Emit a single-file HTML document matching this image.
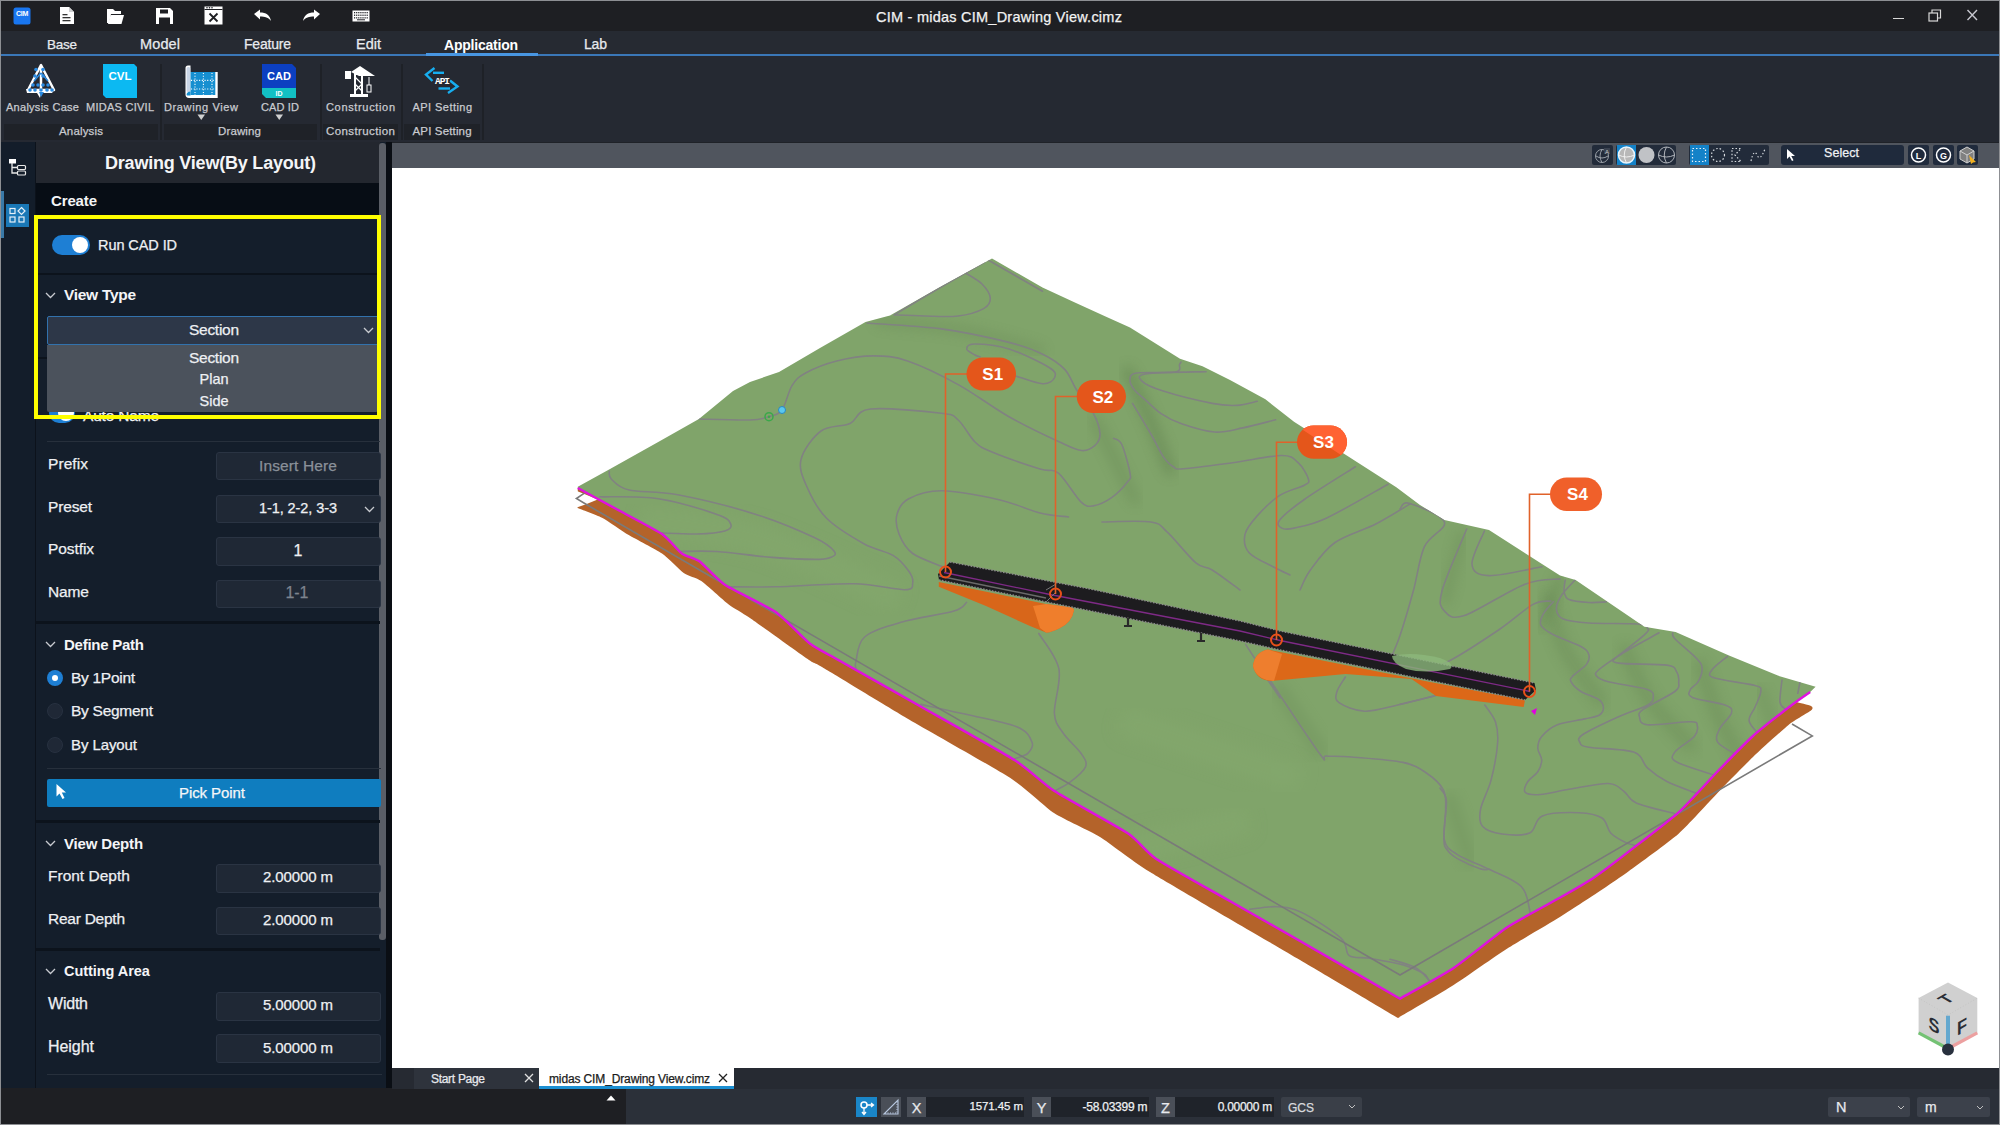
<!DOCTYPE html>
<html><head><meta charset="utf-8">
<style>
*{box-sizing:border-box;margin:0;padding:0}
html,body{width:2000px;height:1125px;overflow:hidden}
body{position:relative;background:#1e1f23;font-family:"Liberation Sans",sans-serif;color:#e8eaee}
.a{position:absolute}
.t{position:absolute;white-space:nowrap;line-height:1;font-family:"Liberation Sans",sans-serif}
svg{overflow:visible}
</style></head><body>
<div class="a" style="left:0px;top:0px;width:2000px;height:1125px;background:transparent;border:1px solid #8d8f93;z-index:50;pointer-events:none"></div>
<div class="a" style="left:1px;top:1px;width:1998px;height:30px;background:#1e1f23;"></div>
<div class="t" style="left:876.0px;top:10.1px;font-size:14.5px;color:#f2f2f2;-webkit-text-stroke:0.25px #f2f2f2;letter-spacing:0.24px;">CIM - midas CIM_Drawing View.cimz</div>
<svg class="a" style="left:13px;top:7px;" width="18" height="18" viewBox="0 0 18 18"><rect x="0.5" y="0.5" width="17" height="17" rx="2.5" fill="#1976f0"/><text x="9" y="9" font-size="7" font-weight="bold" fill="#fff" text-anchor="middle" font-family="Liberation Sans" letter-spacing="-0.3">CIM</text></svg>
<svg class="a" style="left:59px;top:6px;" width="16" height="19" viewBox="0 0 16 19"><path d="M1 1H10L15 6V18H1Z" fill="#fff"/><path d="M10 1V6H15" fill="#cfd0d2"/><rect x="3.5" y="8" width="5" height="1.3" fill="#333"/><rect x="3.5" y="11" width="8" height="1.3" fill="#333"/><rect x="3.5" y="14" width="8" height="1.3" fill="#333"/></svg>
<svg class="a" style="left:106px;top:7px;" width="19" height="18" viewBox="0 0 19 18"><path d="M1 2H7L9 4H15V7H5L3 16H1Z" fill="#fff"/><path d="M4.5 8H18L15.5 17H2Z" fill="#fff"/></svg>
<svg class="a" style="left:155px;top:7px;" width="19" height="18" viewBox="0 0 19 18"><path d="M1 1H15L18 4V17H1Z" fill="#fff"/><rect x="5" y="2.5" width="8" height="4" fill="#1e1f23"/><rect x="4" y="10.5" width="11" height="6.5" fill="#1e1f23"/></svg>
<svg class="a" style="left:204px;top:6px;" width="19" height="19" viewBox="0 0 19 19"><rect x="0.5" y="0.5" width="18" height="18" fill="#fff"/><rect x="1.5" y="3.5" width="16" height="14" fill="#fff"/><rect x="0.5" y="3" width="18" height="1" fill="#1e1f23"/><circle cx="3" cy="1.8" r=".8" fill="#1e1f23"/><circle cx="5.5" cy="1.8" r=".8" fill="#1e1f23"/><circle cx="8" cy="1.8" r=".8" fill="#1e1f23"/><path d="M5.5 7.5L13.5 15.5M13.5 7.5L5.5 15.5" stroke="#1e1f23" stroke-width="1.8"/></svg>
<svg class="a" style="left:253px;top:9px;" width="19" height="13" viewBox="0 0 19 13"><path d="M1 5L7 0.5V3.5C13 3.5 17 6 18 12C15.5 8.5 12 7.5 7 7.5V10.5Z" fill="#fff"/></svg>
<svg class="a" style="left:302px;top:9px;" width="19" height="13" viewBox="0 0 19 13"><path d="M18 5L12 0.5V3.5C6 3.5 2 6 1 12C3.5 8.5 7 7.5 12 7.5V10.5Z" fill="#fff"/></svg>
<svg class="a" style="left:352px;top:10px;" width="18" height="12" viewBox="0 0 18 12"><rect x="0.5" y="0.5" width="17" height="11" fill="#fff"/><rect x="2.0" y="2.0" width="1.2" height="1.3" fill="#1e1f23"/><rect x="4.1" y="2.0" width="1.2" height="1.3" fill="#1e1f23"/><rect x="6.2" y="2.0" width="1.2" height="1.3" fill="#1e1f23"/><rect x="8.3" y="2.0" width="1.2" height="1.3" fill="#1e1f23"/><rect x="10.4" y="2.0" width="1.2" height="1.3" fill="#1e1f23"/><rect x="12.5" y="2.0" width="1.2" height="1.3" fill="#1e1f23"/><rect x="14.6" y="2.0" width="1.2" height="1.3" fill="#1e1f23"/><rect x="2.0" y="4.6" width="1.2" height="1.3" fill="#1e1f23"/><rect x="4.1" y="4.6" width="1.2" height="1.3" fill="#1e1f23"/><rect x="6.2" y="4.6" width="1.2" height="1.3" fill="#1e1f23"/><rect x="8.3" y="4.6" width="1.2" height="1.3" fill="#1e1f23"/><rect x="10.4" y="4.6" width="1.2" height="1.3" fill="#1e1f23"/><rect x="12.5" y="4.6" width="1.2" height="1.3" fill="#1e1f23"/><rect x="14.6" y="4.6" width="1.2" height="1.3" fill="#1e1f23"/><rect x="2.0" y="7.2" width="1.2" height="1.3" fill="#1e1f23"/><rect x="4.1" y="7.2" width="1.2" height="1.3" fill="#1e1f23"/><rect x="6.2" y="7.2" width="1.2" height="1.3" fill="#1e1f23"/><rect x="8.3" y="7.2" width="1.2" height="1.3" fill="#1e1f23"/><rect x="10.4" y="7.2" width="1.2" height="1.3" fill="#1e1f23"/><rect x="12.5" y="7.2" width="1.2" height="1.3" fill="#1e1f23"/><rect x="14.6" y="7.2" width="1.2" height="1.3" fill="#1e1f23"/><rect x="5" y="9.3" width="8" height="1" fill="#1e1f23"/></svg>
<div class="a" style="left:1893px;top:18px;width:11px;height:1px;background:#d8d8d8;"></div>
<svg class="a" style="left:1928px;top:9px;" width="14" height="13" viewBox="0 0 14 13"><rect x="1" y="4" width="8.5" height="8" fill="none" stroke="#d8d8d8" stroke-width="1.2"/><path d="M4 4V1H12.5V9H9.5" fill="none" stroke="#d8d8d8" stroke-width="1.2"/></svg>
<svg class="a" style="left:1966px;top:9px;" width="13" height="13" viewBox="0 0 13 13"><path d="M1.5 1L11 11M11 1L1.5 11" stroke="#c8c8d0" stroke-width="1.4"/></svg>
<div class="a" style="left:1px;top:31px;width:1998px;height:23px;background:#262a32;"></div>
<div class="a" style="left:1px;top:54px;width:1998px;height:2px;background:#3a77b8;"></div>
<div class="a" style="left:426px;top:53px;width:112px;height:3px;background:#4896e2;"></div>
<div class="t" style="left:47.0px;top:37.8px;font-size:13.5px;color:#e8eaee;-webkit-text-stroke:0.25px #e8eaee;letter-spacing:-0.25px;">Base</div>
<div class="t" style="left:140.0px;top:36.9px;font-size:14.5px;color:#e8eaee;-webkit-text-stroke:0.25px #e8eaee;letter-spacing:0.12px;">Model</div>
<div class="t" style="left:244.0px;top:37.3px;font-size:14.0px;color:#e8eaee;-webkit-text-stroke:0.25px #e8eaee;letter-spacing:-0.21px;">Feature</div>
<div class="t" style="left:356.0px;top:36.9px;font-size:14.5px;color:#e8eaee;-webkit-text-stroke:0.25px #e8eaee;">Edit</div>
<div class="t" style="left:444.0px;top:37.7px;font-size:14.0px;color:#ffffff;font-weight:bold;letter-spacing:-0.22px;">Application</div>
<div class="t" style="left:584.0px;top:37.3px;font-size:14.0px;color:#e8eaee;-webkit-text-stroke:0.25px #e8eaee;letter-spacing:-0.18px;">Lab</div>
<div class="a" style="left:1px;top:56px;width:1998px;height:86px;background:#252932;"></div>
<div class="a" style="left:4px;top:124px;width:154px;height:16px;background:#1f2228;"></div>
<div class="a" style="left:164px;top:124px;width:153px;height:16px;background:#1f2228;"></div>
<div class="a" style="left:323px;top:124px;width:75px;height:16px;background:#1f2228;"></div>
<div class="a" style="left:404px;top:124px;width:76px;height:16px;background:#1f2228;"></div>
<div class="a" style="left:160px;top:64px;width:2px;height:76px;background:#1e2127;"></div>
<div class="a" style="left:320px;top:64px;width:2px;height:76px;background:#1e2127;"></div>
<div class="a" style="left:401px;top:64px;width:2px;height:76px;background:#1e2127;"></div>
<div class="a" style="left:482px;top:64px;width:2px;height:76px;background:#1e2127;"></div>
<div class="t" style="left:6.0px;top:102.1px;font-size:11.0px;color:#c9cbd0;-webkit-text-stroke:0.25px #c9cbd0;letter-spacing:0.27px;">Analysis Case</div>
<div class="t" style="left:86.0px;top:102.1px;font-size:11.0px;color:#c9cbd0;-webkit-text-stroke:0.25px #c9cbd0;letter-spacing:0.26px;">MIDAS CIVIL</div>
<div class="t" style="left:164.0px;top:102.1px;font-size:11.0px;color:#c9cbd0;-webkit-text-stroke:0.25px #c9cbd0;letter-spacing:0.63px;">Drawing View</div>
<div class="t" style="left:261.0px;top:102.1px;font-size:11.0px;color:#c9cbd0;-webkit-text-stroke:0.25px #c9cbd0;letter-spacing:0.14px;">CAD ID</div>
<div class="t" style="left:326.0px;top:102.1px;font-size:11.0px;color:#c9cbd0;-webkit-text-stroke:0.25px #c9cbd0;letter-spacing:0.66px;">Construction</div>
<div class="t" style="left:412.5px;top:102.1px;font-size:11.0px;color:#c9cbd0;-webkit-text-stroke:0.25px #c9cbd0;letter-spacing:0.45px;">API Setting</div>
<div class="t" style="left:59.0px;top:126.3px;font-size:11.5px;color:#c9cbd0;-webkit-text-stroke:0.25px #c9cbd0;letter-spacing:0.17px;">Analysis</div>
<div class="t" style="left:218.0px;top:126.3px;font-size:11.5px;color:#c9cbd0;-webkit-text-stroke:0.25px #c9cbd0;letter-spacing:0.13px;">Drawing</div>
<div class="t" style="left:326.0px;top:126.3px;font-size:11.5px;color:#c9cbd0;-webkit-text-stroke:0.25px #c9cbd0;letter-spacing:0.40px;">Construction</div>
<div class="t" style="left:412.5px;top:126.3px;font-size:11.5px;color:#c9cbd0;-webkit-text-stroke:0.25px #c9cbd0;letter-spacing:0.15px;">API Setting</div>
<svg class="a" style="left:197px;top:114px;" width="9" height="7" viewBox="0 0 9 7"><path d="M0.5 0.5H8L4.25 6Z" fill="#d0d0d0"/></svg>
<svg class="a" style="left:275px;top:114px;" width="9" height="7" viewBox="0 0 9 7"><path d="M0.5 0.5H8L4.25 6Z" fill="#d0d0d0"/></svg>
<svg class="a" style="left:24px;top:63px;" width="34" height="36" viewBox="0 0 34 36"><path d="M17 2L4 27H30Z" fill="none" stroke="#fff" stroke-width="2.5" stroke-linejoin="round"/><path d="M2 26H31L28 30H17L16 35L13 30H3Z" fill="#fff"/><path d="M17 3V30" stroke="#fff" stroke-width="2.5"/><path d="M10 18L17 10M17 10L24 18" stroke="#2a8ae0" stroke-width="1.5"/><circle cx="12" cy="6.5" r="1.8" fill="#2a8ae0"/><circle cx="19" cy="6.5" r="1.8" fill="#2a8ae0"/><circle cx="11" cy="13" r="1.8" fill="#2a8ae0"/><circle cx="19" cy="13" r="1.8" fill="#2a8ae0"/><circle cx="9" cy="22" r="1.8" fill="#2a8ae0"/><circle cx="14" cy="22" r="1.8" fill="#2a8ae0"/><circle cx="19" cy="22" r="1.8" fill="#2a8ae0"/><circle cx="24" cy="22" r="1.8" fill="#2a8ae0"/><circle cx="6" cy="27" r="1.8" fill="#2a8ae0"/><circle cx="11" cy="27" r="1.8" fill="#2a8ae0"/><circle cx="17" cy="27" r="1.8" fill="#2a8ae0"/><circle cx="23" cy="27" r="1.8" fill="#2a8ae0"/><circle cx="28" cy="27" r="1.8" fill="#2a8ae0"/><path d="M15 29H20L17 34Z" fill="#2a8ae0"/></svg>
<svg class="a" style="left:103px;top:64px;" width="34" height="34" viewBox="0 0 34 34"><path d="M0 0H31L34 3V34H3L0 31Z" fill="#0cb9f2"/><text x="17" y="16" font-size="11.5" font-weight="bold" fill="#fff" text-anchor="middle" font-family="Liberation Sans">CVL</text></svg>
<svg class="a" style="left:184px;top:64px;" width="35" height="35" viewBox="0 0 35 35"><path d="M1.5 4Q1.5 1.5 4 1.5H6.5V8H33.7V33.9H5Q1.5 33.9 1.5 30.5Z" fill="#fff"/><rect x="2.6" y="3" width="3.6" height="25" rx="1.5" fill="#c9d5e6"/><rect x="6.5" y="8" width="24.8" height="23" fill="#168fd0"/><path d="M2.6 31Q2.6 27.5 6.5 27.5V31.5H5Q2.6 31.5 2.6 31Z" fill="#168fd0"/><path d="M11 9V31" stroke="#fff" stroke-width="1.1" stroke-dasharray="1.1 1.6"/><path d="M19.4 9V31" stroke="#fff" stroke-width="1.1" stroke-dasharray="1.1 1.6"/><path d="M28 9V31" stroke="#fff" stroke-width="1.1" stroke-dasharray="1.1 1.6"/><path d="M7 16.4H31" stroke="#fff" stroke-width="1.1" stroke-dasharray="1.1 1.6"/><path d="M7 25H31" stroke="#fff" stroke-width="1.1" stroke-dasharray="1.1 1.6"/></svg>
<svg class="a" style="left:262px;top:64px;" width="34" height="35" viewBox="0 0 34 35"><path d="M0 0H30L34 4V24H0Z" fill="#0c3fc1"/><path d="M0 24H34V34H4L0 30Z" fill="#12c0c4"/><text x="17" y="16" font-size="11" font-weight="bold" fill="#fff" text-anchor="middle" font-family="Liberation Sans">CAD</text><text x="17" y="32" font-size="7" font-weight="bold" fill="#fff" text-anchor="middle" font-family="Liberation Sans">ID</text></svg>
<svg class="a" style="left:345px;top:65px;" width="32" height="33" viewBox="0 0 32 33"><path d="M6 7L15 1L30 11H14Z" fill="#fff"/><rect x="0" y="6" width="6" height="8" fill="#fff"/><rect x="10" y="9" width="7" height="21" fill="none" stroke="#fff" stroke-width="2"/><path d="M10 12L17 19M17 19L10 26M10 19L17 26" stroke="#fff" stroke-width="1.2"/><rect x="5" y="29" width="18" height="3" fill="#fff"/><path d="M24 12V20" stroke="#fff" stroke-width="1"/><rect x="22" y="20" width="4" height="7" fill="none" stroke="#fff" stroke-width="1"/></svg>
<svg class="a" style="left:424px;top:66px;" width="36" height="30" viewBox="0 0 36 30"><path d="M10.5 2L2 8.6L8.5 15" fill="none" stroke="#17aef0" stroke-width="2.4" stroke-linejoin="miter"/><path d="M9 6.8H20" stroke="#17aef0" stroke-width="2.4"/><path d="M26 14.5L33.5 20.5L24 27" fill="none" stroke="#17aef0" stroke-width="2.4"/><path d="M14.5 22.5H26" stroke="#17aef0" stroke-width="2.4"/><rect x="10.5" y="10" width="15" height="9" fill="#252932"/><text x="18" y="18.2" font-size="9.5" font-weight="bold" fill="#fff" text-anchor="middle" font-family="Liberation Mono" letter-spacing="-1">API</text></svg>
<div class="a" style="left:392px;top:168px;width:1607px;height:900px;background:#ffffff;"></div>
<svg class="a" style="left:0;top:0" width="2000" height="1125" viewBox="0 0 2000 1125"><defs><filter id="bl" x="-20%" y="-20%" width="140%" height="140%"><feGaussianBlur stdDeviation="9"/></filter><filter id="bl2" x="-20%" y="-20%" width="140%" height="140%"><feGaussianBlur stdDeviation="6"/></filter><clipPath id="gc"><path d="M577.8 486.7 L610.0 469.0 L660.0 441.0 L698.9 418.9 L733.0 391.0 L750.0 382.0 L779.0 372.0 L820.0 348.0 L865.5 322.0 L890.0 315.5 L940.0 287.0 L992.0 258.4 L1042.5 287.5 L1073.8 301.9 L1105.0 316.2 L1130.0 327.5 L1180.0 358.8 L1202.5 366.2 L1230.0 380.0 L1265.4 399.3 L1294.0 421.8 L1345.2 454.5 L1396.3 487.2 L1420.0 505.0 L1444.4 520.0 L1489.0 530.0 L1560.0 575.6 L1575.6 580.0 L1644.4 626.7 L1675.6 632.0 L1729.0 655.6 L1777.8 675.6 L1815.6 686.7 L1810.2 692.0 L1810.2 692.0 C1808.0 693.5 1794.2 703.1 1788.5 707.5 C1782.8 711.9 1760.1 729.6 1753.0 736.0 C1745.9 742.4 1724.9 763.9 1717.5 771.5 C1710.1 779.1 1687.4 804.4 1678.6 812.4 C1669.8 820.4 1637.5 844.8 1629.0 851.4 C1620.5 858.0 1600.2 873.4 1593.4 878.0 C1586.6 882.6 1569.3 892.4 1560.7 897.3 C1552.1 902.2 1518.0 920.2 1507.3 927.2 C1496.6 934.2 1464.7 960.6 1454.0 967.7 C1443.3 974.9 1405.4 995.6 1400.0 998.7 L1400.0 998.7 C1390.0 992.9 1317.2 950.9 1300.0 941.0 C1282.8 931.1 1242.5 908.3 1228.0 900.0 C1213.5 891.7 1165.5 865.1 1155.5 858.4 C1145.5 851.7 1137.9 840.0 1127.8 833.3 C1117.7 826.6 1065.7 798.3 1054.4 791.0 C1043.1 783.7 1027.9 768.5 1014.4 760.0 C1000.9 751.5 936.9 715.7 919.3 705.7 C901.7 695.7 849.2 666.2 838.3 660.0 C827.3 653.8 816.1 648.3 809.8 643.5 C803.5 638.7 784.2 617.9 775.7 612.0 C767.2 606.1 732.4 589.9 724.8 584.8 C717.2 579.7 703.7 564.4 699.4 561.3 C695.1 558.2 685.5 556.2 681.8 553.5 C678.1 550.8 668.2 538.2 662.0 534.0 C655.8 529.8 628.4 515.6 620.0 511.0 C611.6 506.4 582.0 490.3 577.8 488.0Z"/></clipPath></defs><path d="M577.8 488.0 C582.0 490.3 611.6 506.4 620.0 511.0 C628.4 515.6 655.8 529.8 662.0 534.0 C668.2 538.2 678.1 550.8 681.8 553.5 C685.5 556.2 695.1 558.2 699.4 561.3 C703.7 564.4 717.2 579.7 724.8 584.8 C732.4 589.9 767.2 606.1 775.7 612.0 C784.2 617.9 803.5 638.7 809.8 643.5 C816.1 648.3 827.3 653.8 838.3 660.0 C849.2 666.2 901.7 695.7 919.3 705.7 C936.9 715.7 1000.9 751.5 1014.4 760.0 C1027.9 768.5 1043.1 783.7 1054.4 791.0 C1065.7 798.3 1117.7 826.6 1127.8 833.3 C1137.9 840.0 1145.5 851.7 1155.5 858.4 C1165.5 865.1 1213.5 891.7 1228.0 900.0 C1242.5 908.3 1282.8 931.1 1300.0 941.0 C1317.2 950.9 1390.0 992.9 1400.0 998.7 L1400.0 998.7 C1405.4 995.6 1443.3 974.9 1454.0 967.7 C1464.7 960.6 1496.6 934.2 1507.3 927.2 C1518.0 920.2 1552.1 902.2 1560.7 897.3 C1569.3 892.4 1586.6 882.6 1593.4 878.0 C1600.2 873.4 1620.5 858.0 1629.0 851.4 C1637.5 844.8 1669.8 820.4 1678.6 812.4 C1687.4 804.4 1710.1 779.1 1717.5 771.5 C1724.9 763.9 1745.9 742.4 1753.0 736.0 C1760.1 729.6 1782.8 711.9 1788.5 707.5 C1794.2 703.1 1808.0 693.5 1810.2 692.0 L1796.3 702.0 C1797.8 702.4 1809.5 705.2 1811.0 706.0 C1812.5 706.8 1813.5 708.4 1811.2 710.3 C1809.0 712.2 1794.3 720.3 1788.5 725.0 C1782.7 729.7 1760.1 750.2 1753.0 757.0 C1745.9 763.8 1724.9 785.3 1717.5 793.0 C1710.1 800.7 1687.4 825.9 1678.6 833.7 C1669.8 841.5 1636.5 865.5 1629.0 871.0 C1621.5 876.5 1610.1 884.2 1603.3 888.8 C1596.5 893.3 1570.3 910.5 1560.7 916.5 C1551.1 922.5 1518.0 941.7 1507.3 948.5 C1496.6 955.3 1464.9 977.8 1454.0 984.8 C1443.1 991.8 1403.6 1014.7 1398.0 1018.0 L1398.0 1018.0 C1388.2 1012.2 1324.8 974.6 1300.0 960.0 C1275.2 945.4 1170.0 884.3 1150.0 872.0 C1130.0 859.7 1109.6 842.9 1100.0 837.0 C1090.4 831.1 1063.4 819.2 1054.4 813.3 C1045.4 807.4 1024.5 787.2 1010.0 777.8 C995.5 768.4 927.8 730.5 909.0 719.4 C890.2 708.3 832.0 672.9 822.0 667.0 C812.0 661.1 816.2 664.9 809.0 660.0 C801.8 655.1 758.0 623.6 750.0 618.0 C742.0 612.4 733.6 608.1 728.7 604.4 C723.8 600.7 705.8 584.1 701.3 581.0 C696.8 577.9 687.6 575.8 683.7 573.0 C679.8 570.2 667.5 557.3 662.0 553.5 C656.5 549.7 634.7 538.6 628.7 535.0 C622.7 531.4 607.1 520.4 602.0 517.7 C596.9 515.0 580.0 509.0 577.5 508.0Z" fill="#b4632a"/><path d="M573 489.5 L584.4 494 L597.7 499.5 L586 504.3 L577.5 507.2 L573 507.2Z" fill="#ffffff"/><path d="M577.8 486.7 L610.0 469.0 L660.0 441.0 L698.9 418.9 L733.0 391.0 L750.0 382.0 L779.0 372.0 L820.0 348.0 L865.5 322.0 L890.0 315.5 L940.0 287.0 L992.0 258.4 L1042.5 287.5 L1073.8 301.9 L1105.0 316.2 L1130.0 327.5 L1180.0 358.8 L1202.5 366.2 L1230.0 380.0 L1265.4 399.3 L1294.0 421.8 L1345.2 454.5 L1396.3 487.2 L1420.0 505.0 L1444.4 520.0 L1489.0 530.0 L1560.0 575.6 L1575.6 580.0 L1644.4 626.7 L1675.6 632.0 L1729.0 655.6 L1777.8 675.6 L1815.6 686.7 L1810.2 692.0 L1810.2 692.0 C1808.0 693.5 1794.2 703.1 1788.5 707.5 C1782.8 711.9 1760.1 729.6 1753.0 736.0 C1745.9 742.4 1724.9 763.9 1717.5 771.5 C1710.1 779.1 1687.4 804.4 1678.6 812.4 C1669.8 820.4 1637.5 844.8 1629.0 851.4 C1620.5 858.0 1600.2 873.4 1593.4 878.0 C1586.6 882.6 1569.3 892.4 1560.7 897.3 C1552.1 902.2 1518.0 920.2 1507.3 927.2 C1496.6 934.2 1464.7 960.6 1454.0 967.7 C1443.3 974.9 1405.4 995.6 1400.0 998.7 L1400.0 998.7 C1390.0 992.9 1317.2 950.9 1300.0 941.0 C1282.8 931.1 1242.5 908.3 1228.0 900.0 C1213.5 891.7 1165.5 865.1 1155.5 858.4 C1145.5 851.7 1137.9 840.0 1127.8 833.3 C1117.7 826.6 1065.7 798.3 1054.4 791.0 C1043.1 783.7 1027.9 768.5 1014.4 760.0 C1000.9 751.5 936.9 715.7 919.3 705.7 C901.7 695.7 849.2 666.2 838.3 660.0 C827.3 653.8 816.1 648.3 809.8 643.5 C803.5 638.7 784.2 617.9 775.7 612.0 C767.2 606.1 732.4 589.9 724.8 584.8 C717.2 579.7 703.7 564.4 699.4 561.3 C695.1 558.2 685.5 556.2 681.8 553.5 C678.1 550.8 668.2 538.2 662.0 534.0 C655.8 529.8 628.4 515.6 620.0 511.0 C611.6 506.4 582.0 490.3 577.8 488.0Z" fill="#80a46a"/><g clip-path="url(#gc)"><path d="M1128.0 372.0 C1131.7 380.0 1143.0 403.7 1150.0 420.0 C1157.0 436.3 1166.7 461.7 1170.0 470.0" fill="none" stroke="#5f7f4e" stroke-width="12" stroke-linecap="round" opacity="0.45" filter="url(#bl2)"/><path d="M1095.0 420.0 C1099.2 428.3 1113.3 456.7 1120.0 470.0 C1126.7 483.3 1132.5 495.0 1135.0 500.0" fill="none" stroke="#5f7f4e" stroke-width="10" stroke-linecap="round" opacity="0.3" filter="url(#bl2)"/><path d="M1548.0 598.0 C1550.8 606.7 1556.3 633.0 1565.0 650.0 C1573.7 667.0 1594.2 691.7 1600.0 700.0" fill="none" stroke="#5f7f4e" stroke-width="14" stroke-linecap="round" opacity="0.28" filter="url(#bl2)"/><path d="M1625.0 650.0 C1629.2 658.3 1639.2 684.2 1650.0 700.0 C1660.8 715.8 1683.3 737.5 1690.0 745.0" fill="none" stroke="#5f7f4e" stroke-width="14" stroke-linecap="round" opacity="0.28" filter="url(#bl2)"/><path d="M1700.0 665.0 C1703.3 674.2 1712.5 703.3 1720.0 720.0 C1727.5 736.7 1740.8 757.5 1745.0 765.0" fill="none" stroke="#5f7f4e" stroke-width="14" stroke-linecap="round" opacity="0.28" filter="url(#bl2)"/><path d="M1760.0 690.0 C1762.5 696.7 1772.5 723.3 1775.0 730.0" fill="none" stroke="#5f7f4e" stroke-width="10" stroke-linecap="round" opacity="0.25" filter="url(#bl2)"/><path d="M1560.0 578.0 C1557.0 585.8 1545.0 617.2 1542.0 625.0" fill="none" stroke="#5f7f4e" stroke-width="10" stroke-linecap="round" opacity="0.35" filter="url(#bl2)"/><path d="M1462.0 536.0 C1459.2 546.7 1447.8 589.3 1445.0 600.0" fill="none" stroke="#5f7f4e" stroke-width="10" stroke-linecap="round" opacity="0.28" filter="url(#bl2)"/><path d="M1280.0 690.0 C1286.7 700.0 1313.3 740.0 1320.0 750.0" fill="none" stroke="#5f7f4e" stroke-width="16" stroke-linecap="round" opacity="0.2" filter="url(#bl2)"/><path d="M1450.0 800.0 C1453.3 810.0 1466.7 850.0 1470.0 860.0" fill="none" stroke="#5f7f4e" stroke-width="16" stroke-linecap="round" opacity="0.2" filter="url(#bl2)"/><path d="M880.0 322.0 C893.3 323.3 933.3 325.3 960.0 330.0 C986.7 334.7 1026.7 346.7 1040.0 350.0" fill="none" stroke="#5f7f4e" stroke-width="10" stroke-linecap="round" opacity="0.25" filter="url(#bl2)"/><path d="M640.0 520.0 C660.0 523.3 716.7 526.7 760.0 540.0 C803.3 553.3 876.7 590.0 900.0 600.0" fill="none" stroke="#8db276" stroke-width="30" opacity="0.2" filter="url(#bl)"/><path d="M1120.0 720.0 C1150.0 730.0 1270.0 770.0 1300.0 780.0" fill="none" stroke="#8db276" stroke-width="30" opacity="0.2" filter="url(#bl)"/><path d="M1000.0 880.0 C1041.7 870.0 1208.3 830.0 1250.0 820.0" fill="none" stroke="#8db276" stroke-width="30" opacity="0.2" filter="url(#bl)"/></g><g fill="none" stroke="#818282" stroke-width="1.6" stroke-linejoin="round" stroke-linecap="round" clip-path="url(#gc)"><path d="M894.0 315.0 C901.0 310.8 920.8 298.8 936.0 290.0 C951.2 281.2 976.8 266.7 985.0 262.0"/><path d="M987.5 260.6 C988.3 260.9 983.3 257.4 992.5 262.5 C1001.7 267.6 1034.2 286.5 1042.5 291.2"/><path d="M965.5 273.0 C968.2 274.8 977.9 279.8 982.0 284.0 C986.1 288.2 990.0 293.9 990.3 298.0 C990.6 302.1 989.0 305.6 983.6 308.6 C978.2 311.6 967.9 314.8 958.0 316.0 C948.1 317.2 934.9 316.2 924.5 316.0 C914.1 315.8 900.5 315.2 895.7 315.0"/><path d="M867.0 323.0 C879.4 324.0 917.7 325.7 941.4 328.9 C965.1 332.1 992.1 338.2 1009.0 342.4 C1025.9 346.6 1033.4 349.7 1042.7 354.2 C1052.0 358.7 1059.1 363.5 1064.7 369.4 C1070.3 375.3 1071.7 382.4 1076.5 389.7 C1081.3 397.0 1089.5 406.0 1093.4 413.3 C1097.3 420.6 1099.7 428.2 1100.0 433.6 C1100.3 439.0 1098.1 442.6 1095.0 445.4 C1091.9 448.2 1087.5 451.1 1081.6 450.5 C1075.7 449.9 1071.7 447.6 1059.6 442.0 C1047.5 436.4 1025.9 426.3 1009.0 416.7 C992.1 407.1 975.1 393.9 958.2 384.6 C941.3 375.3 921.7 365.8 907.6 361.0 C893.5 356.2 885.6 355.9 873.8 355.9 C862.0 355.9 848.1 358.1 836.7 361.0 C825.3 363.9 813.1 368.9 805.6 373.0 C798.1 377.1 795.9 379.4 792.0 385.6 C788.1 391.8 785.8 404.8 782.0 410.0 C778.2 415.2 774.3 415.0 769.0 416.7 C763.7 418.4 761.7 419.6 750.0 420.0 C738.3 420.4 707.5 419.2 699.0 419.0"/><path d="M980.0 356.7 C979.2 356.4 977.2 356.3 975.0 355.0 C972.8 353.7 966.7 350.8 966.7 349.0 C966.7 347.2 968.0 344.0 975.0 344.0 C982.0 344.0 996.6 345.1 1009.0 349.0 C1021.4 352.9 1041.9 362.9 1049.5 367.7 C1057.1 372.5 1055.6 375.1 1054.5 377.8 C1053.4 380.5 1049.2 384.1 1042.7 383.8 C1036.2 383.5 1020.2 377.3 1015.7 376.0"/><path d="M1113.6 438.4 C1115.0 439.4 1119.1 438.7 1121.8 444.5 C1124.5 450.3 1129.0 467.0 1130.0 473.1 C1131.0 479.2 1131.1 477.2 1128.0 481.3 C1124.9 485.4 1117.4 493.6 1111.6 497.7 C1105.8 501.8 1098.3 505.2 1093.2 505.9 C1088.1 506.6 1086.7 507.3 1080.9 501.8 C1075.1 496.3 1065.2 478.6 1058.4 473.1 C1051.6 467.6 1051.1 472.5 1040.0 469.0 C1028.9 465.5 1002.8 456.5 992.0 452.0 C981.2 447.5 980.6 447.3 975.0 442.0 C969.4 436.7 963.8 424.8 958.2 420.0 C952.6 415.2 956.0 415.1 941.4 413.3 C926.8 411.5 885.6 407.3 870.4 409.0 C855.2 410.7 858.2 419.7 850.0 423.4 C841.8 427.1 829.2 425.0 821.0 431.0 C812.8 437.0 803.3 450.3 801.0 459.6 C798.7 468.9 802.7 477.2 807.0 487.0 C811.3 496.8 817.1 508.8 826.6 518.3 C836.1 527.8 852.7 537.5 863.8 543.7 C874.9 549.9 885.5 550.9 893.0 555.4 C900.5 559.9 905.4 566.4 908.7 571.0 C912.0 575.6 913.3 579.7 912.7 582.8 C912.1 585.9 914.7 589.5 904.9 589.7 C895.1 589.9 875.5 584.3 854.0 583.8 C832.5 583.3 796.9 586.3 775.7 586.8 C754.5 587.3 734.9 586.8 726.8 586.8"/><path d="M609.3 471.3 C609.6 472.6 608.0 475.9 611.3 479.0 C614.6 482.1 617.9 487.4 629.0 490.0 C640.1 492.6 656.6 490.7 677.8 494.8 C699.0 498.9 733.2 507.2 756.0 514.4 C778.8 521.6 801.7 531.6 814.8 537.8 C827.9 544.0 831.8 548.2 834.4 551.5 C837.0 554.8 833.8 556.1 830.5 557.4 C827.2 558.7 824.6 559.4 814.8 559.4 C805.0 559.4 788.1 558.7 771.8 557.4 C755.5 556.1 732.7 552.5 717.0 551.5 C701.3 550.5 684.3 551.5 677.8 551.5"/><path d="M599.6 496.8 C609.4 497.1 638.7 495.8 658.3 498.7 C677.9 501.6 704.9 510.2 717.0 514.4 C729.1 518.6 729.4 521.2 730.7 524.0 C732.0 526.8 730.3 529.3 724.8 531.0 C719.2 532.7 707.9 533.7 697.4 534.0 C686.9 534.3 667.9 533.2 662.0 533.0"/><path d="M944.0 567.2 C938.8 564.9 920.2 559.0 912.7 553.5 C905.2 548.0 901.6 540.5 899.0 534.0 C896.4 527.5 895.4 520.3 897.0 514.4 C898.6 508.5 901.2 502.6 908.7 498.7 C916.2 494.8 926.8 490.6 942.0 490.8 C957.2 491.0 983.7 496.3 1000.0 500.0 C1016.3 503.7 1028.6 510.2 1040.0 513.0 C1051.4 515.8 1063.8 516.3 1068.6 517.0"/><path d="M966.6 602.4 C964.5 603.8 964.8 607.7 954.0 611.0 C943.2 614.3 916.9 617.7 902.0 622.0 C887.1 626.3 872.3 630.3 864.6 637.0 C856.9 643.7 857.3 656.8 855.8 662.0 C854.3 667.2 855.8 667.0 855.8 668.0"/><path d="M1038.8 633.5 C1042.2 639.4 1056.3 655.6 1058.9 668.9 C1061.5 682.2 1053.7 702.6 1054.4 713.3 C1055.1 724.0 1058.9 726.6 1063.3 733.3 C1067.7 740.0 1077.3 747.7 1081.0 753.3 C1084.7 758.9 1087.4 761.9 1085.6 766.7 C1083.8 771.5 1075.2 778.2 1070.0 782.2 C1064.8 786.2 1057.0 789.5 1054.4 791.0"/><path d="M921.0 704.4 C927.7 705.9 945.0 709.6 961.0 713.3 C977.0 717.0 1004.9 721.9 1016.7 726.7 C1028.5 731.5 1030.2 737.8 1032.0 742.2 C1033.8 746.6 1030.7 750.5 1027.8 753.3 C1024.9 756.1 1016.6 758.0 1014.4 758.9"/><path d="M1181.0 362.0 C1180.8 362.4 1180.4 362.8 1179.5 364.5 C1178.6 366.2 1182.6 370.6 1175.4 372.0 C1168.2 373.4 1144.2 371.7 1136.6 373.0 C1129.0 374.3 1130.3 377.2 1130.0 380.0 C1129.7 382.8 1132.0 386.8 1134.5 390.0 C1137.0 393.2 1140.4 395.4 1144.8 399.3 C1149.2 403.2 1155.0 409.5 1161.1 413.6 C1167.2 417.7 1172.7 420.7 1181.6 423.8 C1190.5 426.9 1204.1 431.3 1214.3 432.0 C1224.5 432.7 1232.7 429.9 1242.9 427.9 C1253.1 425.9 1270.1 421.1 1275.6 419.8"/><path d="M1206.1 371.7 C1196.2 372.0 1157.5 372.2 1146.8 373.7 C1136.1 375.2 1139.0 378.0 1141.7 380.9 C1144.4 383.8 1151.5 387.4 1163.2 391.1 C1175.0 394.9 1199.9 401.0 1212.2 403.4 C1224.5 405.8 1229.3 405.8 1236.8 405.4 C1244.3 405.0 1253.8 402.0 1257.2 401.3"/><path d="M1132.5 403.4 C1135.6 408.5 1145.8 425.1 1150.9 434.0 C1156.0 442.9 1159.5 451.1 1163.2 456.6 C1167.0 462.1 1170.0 464.8 1173.4 466.8 C1176.8 468.8 1173.7 469.5 1183.6 468.8 C1193.5 468.1 1216.3 464.9 1232.7 462.7 C1249.1 460.5 1270.9 455.5 1281.8 455.5 C1292.7 455.5 1293.7 458.8 1298.1 462.7 C1302.5 466.6 1307.4 475.2 1308.4 479.0 C1309.4 482.8 1309.1 482.5 1304.3 485.2 C1299.5 487.9 1287.5 490.3 1279.7 495.4 C1271.9 500.5 1263.0 509.4 1257.2 515.9 C1251.4 522.4 1246.3 528.2 1245.0 534.3 C1243.7 540.4 1244.3 547.2 1249.1 552.7 C1253.9 558.2 1266.8 563.3 1273.6 567.0 C1280.4 570.7 1287.3 573.7 1290.0 575.0"/><path d="M1355.4 466.8 C1346.9 472.2 1316.9 490.6 1304.3 499.5 C1291.7 508.4 1283.5 515.2 1279.7 520.0 C1276.0 524.8 1279.4 526.8 1281.8 528.1 C1284.2 529.5 1286.5 529.8 1294.0 528.1 C1301.5 526.4 1311.1 525.2 1326.8 517.9 C1342.5 510.6 1377.9 489.8 1388.1 484.2"/><path d="M1410.6 503.6 C1404.8 507.0 1388.4 517.5 1375.8 524.0 C1363.2 530.5 1345.9 534.8 1335.0 542.5 C1324.1 550.2 1316.2 562.1 1310.4 570.0 C1304.6 577.9 1301.7 586.7 1300.0 590.0"/><path d="M1102.0 522.0 C1110.2 522.0 1140.0 520.3 1150.9 522.0 C1161.8 523.7 1159.8 525.4 1167.3 532.2 C1174.8 539.0 1188.4 556.6 1195.9 562.9 C1203.4 569.2 1204.9 565.5 1212.2 570.0 C1219.5 574.5 1235.4 586.7 1240.0 590.0"/><path d="M1400.0 509.0 C1401.5 508.1 1401.6 501.1 1409.0 503.3 C1416.4 505.5 1441.8 514.8 1444.4 522.0 C1447.0 529.2 1429.6 535.2 1424.4 546.7 C1419.2 558.2 1417.4 576.2 1413.3 591.0 C1409.2 605.8 1403.9 624.1 1400.0 635.6 C1396.1 647.1 1391.7 655.9 1390.0 660.0"/><path d="M1466.7 529.0 C1462.6 539.3 1445.7 577.3 1442.0 591.0 C1438.3 604.7 1440.7 606.9 1444.4 611.0 C1448.1 615.1 1451.1 620.0 1464.4 615.6 C1477.7 611.2 1508.5 590.5 1524.4 584.4 C1540.3 578.3 1554.1 579.8 1560.0 578.9"/><path d="M1484.4 531.0 C1482.3 536.6 1471.2 557.0 1472.0 564.4 C1472.8 571.8 1477.3 575.2 1489.0 575.6 C1500.7 576.0 1533.2 568.2 1542.0 566.7"/><path d="M1565.2 580.0 C1565.0 582.0 1563.6 588.4 1564.2 591.7 C1564.8 595.0 1564.9 597.8 1569.0 599.6 C1573.1 601.4 1582.5 602.1 1588.7 602.5 C1594.9 602.9 1603.4 602.0 1606.3 601.9"/><path d="M1551.0 601.0 C1548.0 601.6 1541.5 599.7 1533.0 604.4 C1524.5 609.1 1513.7 619.7 1500.0 629.0 C1486.3 638.3 1464.3 652.8 1451.0 660.0 C1437.7 667.2 1425.2 670.0 1420.0 672.0"/><path d="M1575.0 580.0 C1572.7 582.6 1564.4 590.7 1561.3 595.6 C1558.2 600.5 1556.1 605.4 1556.4 609.3 C1556.7 613.2 1557.9 616.8 1563.3 619.1 C1568.7 621.4 1576.3 622.2 1588.7 623.0 C1601.1 623.8 1627.8 623.2 1637.6 624.0 C1647.4 624.8 1646.1 626.4 1647.4 628.0 C1648.7 629.6 1650.0 629.4 1645.4 633.8 C1640.8 638.2 1627.8 648.3 1620.0 654.3 C1612.2 660.3 1602.4 666.4 1598.5 670.0 C1594.6 673.6 1594.9 673.9 1596.5 675.9 C1598.1 677.9 1599.7 679.4 1608.2 681.7 C1616.7 684.0 1639.9 686.9 1647.4 689.5 C1654.9 692.1 1653.2 694.8 1653.2 697.4 C1653.2 700.0 1653.3 702.0 1647.4 705.2 C1641.5 708.5 1628.8 712.0 1618.0 716.9 C1607.2 721.8 1589.1 730.2 1582.8 734.5 C1576.5 738.8 1578.9 740.3 1579.9 742.4 C1580.9 744.5 1579.7 745.7 1588.7 747.3 C1597.7 748.9 1623.9 748.7 1633.7 752.1 C1643.5 755.5 1641.9 762.9 1647.4 767.8 C1652.9 772.7 1658.8 777.3 1666.9 781.5 C1675.1 785.7 1691.4 791.2 1696.3 793.2"/><path d="M1659.1 632.8 C1652.2 636.7 1624.7 651.2 1618.0 656.3 C1611.3 661.3 1610.8 661.6 1619.0 663.1 C1627.2 664.6 1657.3 663.6 1666.9 665.1 C1676.5 666.6 1674.7 669.1 1676.7 671.9 C1678.7 674.7 1679.0 678.4 1678.7 681.7 C1678.4 685.0 1680.7 686.9 1674.8 691.5 C1668.9 696.1 1649.4 704.9 1643.5 709.1 C1637.6 713.3 1638.8 714.3 1639.5 716.9 C1640.2 719.5 1638.9 724.0 1647.4 724.8 C1655.9 725.6 1682.1 721.6 1690.4 721.8 C1698.7 721.9 1696.7 723.2 1697.3 725.7 C1697.9 728.2 1698.0 732.1 1694.3 736.5 C1690.5 740.9 1677.7 747.9 1674.8 752.1 C1671.9 756.4 1669.9 758.1 1676.7 762.0 C1683.5 765.9 1709.3 773.3 1715.8 775.6"/><path d="M1672.8 632.8 C1673.1 633.8 1670.9 634.5 1674.8 638.7 C1678.7 642.9 1691.8 653.3 1696.3 658.2 C1700.8 663.1 1701.8 664.1 1702.1 668.0 C1702.4 671.9 1700.2 678.1 1698.2 681.7 C1696.2 685.3 1691.4 686.9 1690.4 689.5 C1689.4 692.1 1686.5 694.8 1692.4 697.4 C1698.3 700.0 1719.1 702.6 1725.6 705.2 C1732.1 707.8 1732.5 709.1 1731.5 713.0 C1730.5 716.9 1722.0 723.8 1719.7 728.7 C1717.4 733.6 1714.8 738.0 1717.8 742.4 C1720.8 746.8 1734.1 753.0 1737.4 755.1"/><path d="M1727.6 656.3 C1725.0 658.6 1714.2 666.4 1711.9 670.0 C1709.6 673.6 1706.7 675.2 1713.9 677.8 C1721.1 680.4 1747.2 683.3 1755.0 685.6 C1762.8 687.9 1760.8 687.9 1760.8 691.5 C1760.8 695.1 1757.0 702.3 1755.0 707.2 C1753.0 712.1 1748.4 716.2 1749.1 720.8 C1749.8 725.3 1757.3 732.2 1758.9 734.5"/><path d="M1553.5 601.5 C1551.9 603.5 1545.8 609.4 1543.7 613.3 C1541.6 617.2 1539.2 621.4 1540.8 625.0 C1542.4 628.6 1546.8 631.2 1553.5 634.8 C1560.2 638.4 1575.0 643.2 1580.9 646.5 C1586.8 649.8 1587.7 651.4 1588.7 654.3 C1589.7 657.2 1589.3 660.5 1586.7 664.1 C1584.1 667.7 1575.6 673.0 1573.0 675.9 C1570.4 678.8 1569.7 679.1 1571.0 681.7 C1572.3 684.3 1576.3 688.6 1580.9 691.5 C1585.5 694.4 1594.8 696.7 1598.5 699.3 C1602.2 701.9 1603.2 704.6 1603.4 707.2 C1603.6 709.8 1602.5 713.0 1599.4 715.0 C1596.3 717.0 1591.8 717.3 1584.8 718.9 C1577.8 720.5 1564.6 721.9 1557.4 724.8 C1550.2 727.7 1545.0 732.6 1541.7 736.5 C1538.4 740.4 1537.8 744.3 1537.8 748.2 C1537.8 752.1 1541.7 756.1 1541.7 760.0 C1541.7 763.9 1540.2 768.0 1537.8 771.7 C1535.4 775.4 1529.6 778.5 1527.5 782.0 C1525.4 785.5 1523.2 790.3 1525.3 792.4 C1527.4 794.5 1533.0 795.0 1540.3 794.5 C1547.6 794.0 1557.7 791.1 1569.0 789.3 C1580.3 787.5 1599.0 783.2 1608.2 783.5 C1617.4 783.8 1619.2 788.0 1623.9 791.3 C1628.6 794.5 1627.8 799.3 1636.3 803.0 C1644.8 806.7 1668.3 811.9 1674.7 813.7"/><path d="M1782.0 680.0 C1781.7 683.7 1779.4 697.3 1780.0 702.2 C1780.6 707.1 1784.7 708.0 1785.6 709.2"/><path d="M1800.0 682.0 C1799.6 683.9 1798.2 691.4 1797.8 693.3"/><path d="M1400.0 704.4 C1405.9 702.9 1429.7 697.1 1435.6 695.6"/><path d="M1484.8 705.0 C1486.6 707.8 1493.4 715.6 1495.5 722.0 C1497.6 728.4 1498.3 733.7 1497.6 743.3 C1496.9 752.9 1494.0 768.6 1491.2 779.6 C1488.4 790.6 1481.9 801.7 1480.5 809.5 C1479.1 817.3 1479.1 822.4 1482.7 826.5 C1486.3 830.6 1494.1 832.9 1501.9 834.0 C1509.7 835.1 1522.8 836.0 1529.6 833.0 C1536.3 830.0 1534.2 819.3 1542.4 815.9 C1550.6 812.5 1568.8 812.4 1578.7 812.7 C1588.6 813.1 1596.7 814.6 1602.0 818.0 C1607.3 821.4 1606.8 828.9 1610.7 833.0 C1614.6 837.1 1621.3 840.4 1625.6 842.5 C1629.9 844.6 1634.5 845.2 1636.3 845.7"/><path d="M1440.0 788.1 C1441.1 790.2 1445.7 792.5 1446.4 801.0 C1447.1 809.5 1442.5 830.5 1444.3 839.4 C1446.1 848.3 1449.5 849.3 1457.0 854.3 C1464.5 859.3 1478.3 863.9 1489.0 869.2 C1499.7 874.5 1514.2 879.5 1521.0 886.3 C1527.8 893.1 1527.8 902.5 1529.6 909.8 C1531.4 917.1 1531.3 926.6 1531.7 930.0"/><path d="M1270.7 681.3 C1278.9 693.4 1310.6 741.4 1319.8 753.9 C1329.0 766.4 1320.7 755.5 1326.0 756.0 C1331.3 756.5 1339.0 755.9 1351.8 757.0 C1364.6 758.1 1390.6 759.7 1403.0 762.4 C1415.4 765.1 1419.7 768.4 1426.4 773.0 C1433.2 777.6 1440.3 783.9 1443.5 790.0 C1446.7 796.1 1445.5 801.1 1445.6 809.4 C1445.7 817.7 1443.6 833.2 1443.9 840.0 C1444.2 846.8 1445.0 846.9 1447.3 850.0 C1449.5 853.1 1452.0 855.5 1457.4 858.6 C1462.9 861.7 1474.7 866.9 1480.0 868.7 C1485.3 870.5 1487.5 869.1 1489.0 869.2"/><path d="M1345.4 677.0 C1344.0 679.5 1337.9 687.7 1336.8 692.0 C1335.7 696.3 1334.4 699.5 1339.0 702.7 C1343.6 705.9 1354.6 710.9 1364.6 711.2 C1374.5 711.6 1387.3 707.3 1398.7 704.8 C1410.1 702.3 1427.1 697.7 1432.8 696.3"/><path d="M1245.6 644.4 C1247.1 646.6 1252.9 655.6 1254.4 657.8"/><path d="M1267.8 680.0 C1269.8 683.0 1278.0 694.8 1280.0 697.8"/><path d="M1249.7 909.3 C1254.2 908.9 1268.0 906.2 1276.7 906.7 C1285.4 907.2 1291.3 907.4 1302.0 912.6 C1312.7 917.8 1333.0 930.8 1340.9 938.0 C1348.8 945.2 1344.5 952.3 1349.3 955.7 C1354.1 959.1 1360.6 956.7 1369.6 958.2 C1378.6 959.8 1394.4 962.5 1403.4 965.0 C1412.4 967.5 1419.4 970.9 1423.6 973.4 C1427.8 975.9 1427.8 979.1 1428.7 980.2"/><path d="M1390.0 959.2 C1394.3 960.6 1409.0 964.2 1415.6 967.7 C1422.2 971.2 1427.2 978.4 1429.5 980.5"/></g><path d="M584.4 493.1 L576.4 498.5 L586.0 504.3 L1400.0 975.0 L1812.3 735.9 L1792.0 724.0" fill="none" stroke="#7a7a7a" stroke-width="1.6"/><path d="M577.8 488.0 C582.0 490.3 611.6 506.4 620.0 511.0 C628.4 515.6 655.8 529.8 662.0 534.0 C668.2 538.2 678.1 550.8 681.8 553.5 C685.5 556.2 695.1 558.2 699.4 561.3 C703.7 564.4 717.2 579.7 724.8 584.8 C732.4 589.9 767.2 606.1 775.7 612.0 C784.2 617.9 803.5 638.7 809.8 643.5 C816.1 648.3 827.3 653.8 838.3 660.0 C849.2 666.2 901.7 695.7 919.3 705.7 C936.9 715.7 1000.9 751.5 1014.4 760.0 C1027.9 768.5 1043.1 783.7 1054.4 791.0 C1065.7 798.3 1117.7 826.6 1127.8 833.3 C1137.9 840.0 1145.5 851.7 1155.5 858.4 C1165.5 865.1 1213.5 891.7 1228.0 900.0 C1242.5 908.3 1282.8 931.1 1300.0 941.0 C1317.2 950.9 1390.0 992.9 1400.0 998.7 L1400.0 998.7 C1405.4 995.6 1443.3 974.9 1454.0 967.7 C1464.7 960.6 1496.6 934.2 1507.3 927.2 C1518.0 920.2 1552.1 902.2 1560.7 897.3 C1569.3 892.4 1586.6 882.6 1593.4 878.0 C1600.2 873.4 1620.5 858.0 1629.0 851.4 C1637.5 844.8 1669.8 820.4 1678.6 812.4 C1687.4 804.4 1710.1 779.1 1717.5 771.5 C1724.9 763.9 1745.9 742.4 1753.0 736.0 C1760.1 729.6 1782.8 711.9 1788.5 707.5 C1794.2 703.1 1808.0 693.5 1810.2 692.0" fill="none" stroke="#e010e0" stroke-width="2.4" stroke-linejoin="round"/><path d="M938.8 582 L1046 604 L1072.4 607.6 L1074 610 Q1072 622 1060 628 Q1050 633 1046 632.4 L1030 626 L986 606 L938.8 586.8Z" fill="#d8661a"/><path d="M1033 606 L1046 604 L1072.4 607.6 L1074 610 Q1072 622 1060 628 Q1050 633 1046 632.4 L1040 628 Q1036 615 1033 606Z" fill="#ef7e2c"/><path d="M1253 666 Q1255 652 1268 649.6 L1430 682 L1525 700 L1523.7 707 L1436 696 L1411.5 679 L1345.5 674 L1271 681 Q1256 680 1253 666Z" fill="#dc6818"/><path d="M1253 666 Q1255 652 1268 649.6 L1282 654 L1274 681 Q1256 680 1253 666Z" fill="#ee7e2e"/><path d="M950 562 L1090 589 L1240 621 L1280 631 L1534.5 683 L1536 690 L1525 700 L1280 650 L1240 641 L1046 602 L939 580 L938 574Z" fill="#1d1c1f"/><path d="M950 562 L1090 589 L1240 621 L1280 631 L1534.5 683" fill="none" stroke="#8a8a8a" stroke-width="1.4" stroke-dasharray="1.5 1.5"/><path d="M939 580 L1046 602 L1240 641 L1280 650 L1525 700" fill="none" stroke="#8a8a8a" stroke-width="1.6" stroke-dasharray="1.5 1.5"/><path d="M939 576 L1046 598" fill="none" stroke="#6a6a6a" stroke-width="1.5"/><path d="M944 572.5 L1050 594.5 L1240 631 L1280 640.5 L1530 691.5" fill="none" stroke="#7e2a86" stroke-width="1.3"/><path d="M1046 590 L1056 584 M1046 602 L1056 592" stroke="#777" stroke-width="1"/><path d="M1392 656 Q1412 651 1440 658 Q1456 664 1450 669 Q1425 674 1406 669 Q1392 663 1392 656Z" fill="#8cb87c" opacity="0.8"/><path d="M1128 618 l0 8 M1124 626 l8 0 M1201 633 l0 8 M1197 641 l8 0" stroke="#2a2a2a" stroke-width="2.2" fill="none"/><path d="M1531 711 l6 -3 l-2 7z" fill="#e000e0"/><circle cx="769" cy="416.7" r="4" fill="none" stroke="#3aa84a" stroke-width="1.5"/><circle cx="769" cy="416.7" r="1.3" fill="#3aa84a"/><circle cx="782" cy="410" r="3.5" fill="#5ac8f0" stroke="#2a88c0" stroke-width="1"/><path d="M968.5 374.0H945.5V572" fill="none" stroke="#e0622a" stroke-width="1.6"/><rect x="966.5" y="357.5" width="49.5" height="33.0" rx="16.5" fill="#e4561b"/><text x="992.75" y="380.0" font-size="17" font-weight="bold" fill="#fff" text-anchor="middle" font-family="Liberation Sans">S1</text><circle cx="945.5" cy="572" r="5.5" fill="none" stroke="#e8501a" stroke-width="2"/><path d="M1078.7 396.5H1055.5V594" fill="none" stroke="#e0622a" stroke-width="1.6"/><rect x="1076.7" y="380" width="49.299999999999955" height="33" rx="16.5" fill="#e4561b"/><text x="1102.85" y="402.5" font-size="17" font-weight="bold" fill="#fff" text-anchor="middle" font-family="Liberation Sans">S2</text><circle cx="1055.5" cy="594" r="5.5" fill="none" stroke="#e8501a" stroke-width="2"/><path d="M1299 442.20000000000005H1276.5V640" fill="none" stroke="#e0622a" stroke-width="1.6"/><rect x="1297" y="425.6" width="50" height="33.19999999999999" rx="16.599999999999994" fill="#e4561b"/><clipPath id="s3c"><path d="M1290 400 L1303 430 L1341 455 L1360 470 L1360 400Z"/></clipPath><rect x="1297" y="425.6" width="50" height="33.19999999999999" rx="16.599999999999994" fill="#ff6233" clip-path="url(#s3c)"/><text x="1323.5" y="448.20000000000005" font-size="17" font-weight="bold" fill="#fff" text-anchor="middle" font-family="Liberation Sans">S3</text><circle cx="1276.5" cy="640" r="5.5" fill="none" stroke="#e8501a" stroke-width="2"/><path d="M1552 494.25H1529.5V691.5" fill="none" stroke="#e0622a" stroke-width="1.6"/><rect x="1550" y="477.5" width="52" height="33.5" rx="16.75" fill="#f0602a"/><text x="1577.5" y="500.25" font-size="17" font-weight="bold" fill="#fff" text-anchor="middle" font-family="Liberation Sans">S4</text><circle cx="1529.5" cy="691.5" r="5.5" fill="none" stroke="#e8501a" stroke-width="2"/></svg>
<svg class="a" style="left:1918px;top:980px;" width="60" height="78" viewBox="0 0 60 78"><path d="M30 2.5L59.3 18.1V52.9L30 69.5L0.6 52.9V18.1Z" fill="#d0d0d0"/><path d="M0.6 18.1L30 35L59.3 18.1" fill="none" stroke="#c0c0c0" stroke-width="0.8" stroke-dasharray="1 2"/><path d="M0.6 52.9L26 66.5" stroke="#74c274" stroke-width="3.2"/><path d="M59.3 52.9L34 66.5" stroke="#eca0a0" stroke-width="3.2"/><path d="M30 35.7V66" stroke="#64a8cf" stroke-width="4"/><circle cx="30" cy="69.5" r="6" fill="#28303e"/><text transform="matrix(0.866,-0.5,0.866,0.5,33,22)" font-size="17" font-weight="bold" fill="#2a2e36" text-anchor="middle" font-family="Liberation Sans">T</text><text transform="matrix(0.866,0.5,0,1,16,52)" font-size="19" font-weight="bold" fill="#2a2e36" text-anchor="middle" font-family="Liberation Sans">S</text><text transform="matrix(0.866,-0.5,0,1,44,53)" font-size="19" font-weight="bold" fill="#2a2e36" text-anchor="middle" font-family="Liberation Sans">F</text></svg>
<div class="a" style="left:1px;top:142px;width:34px;height:946px;background:#131d2a;"></div>
<div class="a" style="left:35px;top:142px;width:1px;height:946px;background:#0c121b;"></div>
<div class="a" style="left:36px;top:142px;width:350px;height:946px;background:#141e2b;"></div>
<div class="a" style="left:36px;top:142px;width:344px;height:41px;background:#23272f;"></div>
<div class="t" style="left:105.0px;top:153.6px;font-size:18.0px;color:#f4f5f7;font-weight:bold;letter-spacing:-0.21px;">Drawing View(By Layout)</div>
<div class="a" style="left:36px;top:183px;width:344px;height:32px;background:#070d15;"></div>
<div class="t" style="left:51.0px;top:193.2px;font-size:15.0px;color:#f4f5f7;font-weight:bold;letter-spacing:-0.14px;">Create</div>
<svg class="a" style="left:8px;top:158px;" width="19" height="18" viewBox="0 0 19 18"><rect x="1" y="1" width="7" height="4.5" fill="#fff"/><path d="M4 5V15H9M4 9.5H9" fill="none" stroke="#e8e8e8" stroke-width="1.3"/><rect x="9.5" y="7.5" width="8" height="4" rx="1" fill="none" stroke="#e8e8e8" stroke-width="1.2"/><rect x="9.5" y="13" width="8" height="4" rx="1" fill="none" stroke="#e8e8e8" stroke-width="1.2"/></svg>
<div class="a" style="left:1px;top:191px;width:3px;height:47px;background:#3a7aa8;"></div>
<div class="a" style="left:6px;top:204px;width:23px;height:23px;background:#1a78b6;"></div>
<svg class="a" style="left:9px;top:207px;" width="17" height="17" viewBox="0 0 17 17"><rect x="1" y="1.5" width="5" height="5" fill="none" stroke="#e6f0f8" stroke-width="1.2"/><path d="M12.5 0.5L16 4L12.5 7.5L9 4Z" fill="none" stroke="#e6f0f8" stroke-width="1.2"/><rect x="1" y="10" width="5" height="5" fill="none" stroke="#e6f0f8" stroke-width="1.2"/><rect x="10" y="10" width="5" height="5" fill="none" stroke="#e6f0f8" stroke-width="1.2"/></svg>
<div class="a" style="left:379px;top:143px;width:7px;height:797px;background:#5a5e66;border-radius:3px"></div>
<div class="a" style="left:386px;top:142px;width:6px;height:946px;background:#0a0e14;"></div>
<div class="a" style="left:52px;top:235px;width:38px;height:20px;background:#1e7fd4;border-radius:10px"></div>
<div class="a" style="left:72px;top:237px;width:16px;height:16px;background:#ffffff;border-radius:8px"></div>
<div class="t" style="left:98.0px;top:237.7px;font-size:14.5px;color:#eef0f3;-webkit-text-stroke:0.25px #eef0f3;letter-spacing:-0.08px;">Run CAD ID</div>
<div class="a" style="left:36px;top:273px;width:344px;height:2px;background:#0c131c;"></div>
<svg class="a" style="left:45px;top:292px;" width="11" height="7" viewBox="0 0 11 7"><path d="M1 1L5.5 5.5L10 1" fill="none" stroke="#c8cbd0" stroke-width="1.3"/></svg>
<div class="t" style="left:64.0px;top:286.9px;font-size:15.5px;color:#f4f5f7;font-weight:bold;letter-spacing:-0.29px;">View Type</div>
<div class="a" style="left:49px;top:403px;width:26px;height:20px;background:#1e7fd4;border-radius:10px"></div>
<div class="a" style="left:58px;top:405px;width:16px;height:16px;background:#ffffff;border-radius:8px"></div>
<div class="t" style="left:83.0px;top:407.9px;font-size:15.5px;color:#eef0f3;-webkit-text-stroke:0.25px #eef0f3;letter-spacing:-0.19px;">Auto Name</div>
<div class="a" style="left:36px;top:357px;width:344px;height:2px;background:#0c131c;"></div>
<div class="a" style="left:47px;top:316px;width:332px;height:29px;background:#2d3748;border:1px solid #3272ad;border-radius:2px"></div>
<div class="t" style="left:189.0px;top:322.4px;font-size:15.5px;color:#eef0f3;-webkit-text-stroke:0.25px #eef0f3;letter-spacing:-0.28px;">Section</div>
<svg class="a" style="left:363px;top:327px;" width="11" height="7" viewBox="0 0 11 7"><path d="M1 1L5.5 5.5L10 1" fill="none" stroke="#c8cbd0" stroke-width="1.3"/></svg>
<div class="a" style="left:47px;top:345px;width:331px;height:67px;background:#4b525c;border-radius:0 0 2px 2px"></div>
<div class="t" style="left:189.0px;top:349.5px;font-size:15.5px;color:#eef0f3;-webkit-text-stroke:0.25px #eef0f3;letter-spacing:-0.28px;">Section</div>
<div class="t" style="left:199.5px;top:371.7px;font-size:14.5px;color:#eef0f3;-webkit-text-stroke:0.25px #eef0f3;">Plan</div>
<div class="t" style="left:199.5px;top:393.7px;font-size:14.5px;color:#eef0f3;-webkit-text-stroke:0.25px #eef0f3;">Side</div>
<div class="a" style="left:34px;top:215px;width:347px;height:204px;background:transparent;border:4px solid #ffff00"></div>
<div class="a" style="left:47px;top:441px;width:333px;height:1px;background:#27303c;"></div>
<div class="t" style="left:48.0px;top:456.4px;font-size:15.5px;color:#eef0f3;-webkit-text-stroke:0.25px #eef0f3;letter-spacing:0.08px;">Prefix</div>
<div class="a" style="left:216px;top:452px;width:165px;height:28px;background:#1f2835;border:1px solid #2a3443;border-radius:3px"></div>
<div class="t" style="left:259.0px;top:457.6px;font-size:15.5px;color:#8a9099;-webkit-text-stroke:0.25px #8a9099;letter-spacing:0.13px;">Insert Here</div>
<div class="t" style="left:48.0px;top:498.9px;font-size:15.5px;color:#eef0f3;-webkit-text-stroke:0.25px #eef0f3;letter-spacing:-0.16px;">Preset</div>
<div class="a" style="left:216px;top:495px;width:165px;height:28px;background:#1f2835;border:1px solid #2a3443;border-radius:3px"></div>
<div class="t" style="left:259.0px;top:501.3px;font-size:14.5px;color:#eef0f3;-webkit-text-stroke:0.25px #eef0f3;letter-spacing:-0.08px;">1-1, 2-2, 3-3</div>
<svg class="a" style="left:364px;top:506px;" width="11" height="7" viewBox="0 0 11 7"><path d="M1 1L5.5 5.5L10 1" fill="none" stroke="#c8cbd0" stroke-width="1.3"/></svg>
<div class="t" style="left:48.0px;top:540.9px;font-size:15.5px;color:#eef0f3;-webkit-text-stroke:0.25px #eef0f3;letter-spacing:-0.08px;">Postfix</div>
<div class="a" style="left:216px;top:537px;width:165px;height:29px;background:#1f2835;border:1px solid #2a3443;border-radius:3px"></div>
<div class="t" style="left:293.6px;top:542.5px;font-size:16.0px;color:#eef0f3;-webkit-text-stroke:0.25px #eef0f3;">1</div>
<div class="t" style="left:48.0px;top:583.9px;font-size:15.5px;color:#eef0f3;-webkit-text-stroke:0.25px #eef0f3;letter-spacing:-0.12px;">Name</div>
<div class="a" style="left:216px;top:580px;width:165px;height:28px;background:#1f2835;border:1px solid #2a3443;border-radius:3px"></div>
<div class="t" style="left:285.4px;top:585.0px;font-size:16.0px;color:#7d848e;-webkit-text-stroke:0.25px #7d848e;">1-1</div>
<div class="a" style="left:36px;top:621px;width:344px;height:3px;background:#0c131c;"></div>
<svg class="a" style="left:45px;top:641px;" width="11" height="7" viewBox="0 0 11 7"><path d="M1 1L5.5 5.5L10 1" fill="none" stroke="#c8cbd0" stroke-width="1.3"/></svg>
<div class="t" style="left:64.0px;top:637.3px;font-size:15.0px;color:#f4f5f7;font-weight:bold;letter-spacing:-0.25px;">Define Path</div>
<div class="a" style="left:47px;top:670px;width:16px;height:16px;background:#1e7fd4;border-radius:8px"></div>
<div class="a" style="left:52px;top:675px;width:6px;height:6px;background:#ffffff;border-radius:3px"></div>
<div class="t" style="left:71.0px;top:669.9px;font-size:15.5px;color:#eef0f3;-webkit-text-stroke:0.25px #eef0f3;letter-spacing:-0.29px;">By 1Point</div>
<div class="a" style="left:47px;top:703px;width:16px;height:16px;background:#1f2836;border:1px solid #273140;border-radius:8px"></div>
<div class="t" style="left:71.0px;top:703.4px;font-size:15.5px;color:#eef0f3;-webkit-text-stroke:0.25px #eef0f3;letter-spacing:-0.27px;">By Segment</div>
<div class="a" style="left:47px;top:737px;width:16px;height:16px;background:#1f2836;border:1px solid #273140;border-radius:8px"></div>
<div class="t" style="left:71.0px;top:737.3px;font-size:15.0px;color:#eef0f3;-webkit-text-stroke:0.25px #eef0f3;letter-spacing:-0.09px;">By Layout</div>
<div class="a" style="left:47px;top:768px;width:334px;height:1px;background:#27303c;"></div>
<div class="a" style="left:47px;top:779px;width:334px;height:28px;background:#0f7dbf;border-radius:2px"></div>
<svg class="a" style="left:55px;top:783px;" width="12" height="17" viewBox="0 0 12 17"><path d="M1.5 1V13.5L4.5 10.5L7.5 16L9.5 15L6.8 9.5H11Z" fill="#fff"/></svg>
<div class="t" style="left:179.0px;top:784.6px;font-size:15.0px;color:#f4f6f8;-webkit-text-stroke:0.25px #f4f6f8;letter-spacing:-0.08px;">Pick Point</div>
<div class="a" style="left:36px;top:820px;width:344px;height:3px;background:#0c131c;"></div>
<svg class="a" style="left:45px;top:840px;" width="11" height="7" viewBox="0 0 11 7"><path d="M1 1L5.5 5.5L10 1" fill="none" stroke="#c8cbd0" stroke-width="1.3"/></svg>
<div class="t" style="left:64.0px;top:835.8px;font-size:15.0px;color:#f4f5f7;font-weight:bold;letter-spacing:-0.17px;">View Depth</div>
<div class="t" style="left:48.0px;top:868.4px;font-size:15.5px;color:#eef0f3;-webkit-text-stroke:0.25px #eef0f3;">Front Depth</div>
<div class="a" style="left:216px;top:864px;width:165px;height:29px;background:#1f2835;border:1px solid #2a3443;border-radius:3px"></div>
<div class="t" style="left:263.0px;top:869.3px;font-size:15.0px;color:#eef0f3;-webkit-text-stroke:0.25px #eef0f3;letter-spacing:-0.11px;">2.00000 m</div>
<div class="t" style="left:48.0px;top:910.9px;font-size:15.5px;color:#eef0f3;-webkit-text-stroke:0.25px #eef0f3;letter-spacing:-0.25px;">Rear Depth</div>
<div class="a" style="left:216px;top:907px;width:165px;height:28px;background:#1f2835;border:1px solid #2a3443;border-radius:3px"></div>
<div class="t" style="left:263.0px;top:911.8px;font-size:15.0px;color:#eef0f3;-webkit-text-stroke:0.25px #eef0f3;letter-spacing:-0.11px;">2.00000 m</div>
<div class="a" style="left:36px;top:948px;width:344px;height:3px;background:#0c131c;"></div>
<svg class="a" style="left:45px;top:968px;" width="11" height="7" viewBox="0 0 11 7"><path d="M1 1L5.5 5.5L10 1" fill="none" stroke="#c8cbd0" stroke-width="1.3"/></svg>
<div class="t" style="left:64.0px;top:964.2px;font-size:14.5px;color:#f4f5f7;font-weight:bold;letter-spacing:-0.05px;">Cutting Area</div>
<div class="t" style="left:48.0px;top:996.0px;font-size:16.0px;color:#eef0f3;-webkit-text-stroke:0.25px #eef0f3;letter-spacing:-0.22px;">Width</div>
<div class="a" style="left:216px;top:992px;width:165px;height:29px;background:#1f2835;border:1px solid #2a3443;border-radius:3px"></div>
<div class="t" style="left:263.0px;top:997.3px;font-size:15.0px;color:#eef0f3;-webkit-text-stroke:0.25px #eef0f3;letter-spacing:-0.11px;">5.00000 m</div>
<div class="t" style="left:48.0px;top:1038.5px;font-size:16.0px;color:#eef0f3;-webkit-text-stroke:0.25px #eef0f3;letter-spacing:-0.05px;">Height</div>
<div class="a" style="left:216px;top:1034px;width:165px;height:29px;background:#1f2835;border:1px solid #2a3443;border-radius:3px"></div>
<div class="t" style="left:263.0px;top:1039.8px;font-size:15.0px;color:#eef0f3;-webkit-text-stroke:0.25px #eef0f3;letter-spacing:-0.11px;">5.00000 m</div>
<div class="a" style="left:47px;top:1074px;width:335px;height:1px;background:#27303c;"></div>
<div class="a" style="left:392px;top:142px;width:1607px;height:26px;background:#50555e;"></div>
<div class="a" style="left:392px;top:142px;width:1607px;height:1px;background:#1f2228;"></div>
<div class="a" style="left:1592px;top:145px;width:21px;height:20px;background:#222b3a;border-radius:2px"></div>
<svg class="a" style="left:1594px;top:147px;" width="17" height="17" viewBox="0 0 17 17"><circle cx="8" cy="9" r="6.5" fill="none" stroke="#9aa0a8" stroke-width="1"/><path d="M2 9Q8 13 14 9M8 2.5Q4 9 8 15.5" fill="none" stroke="#9aa0a8" stroke-width="1"/><rect x="10" y="1" width="6" height="6" fill="#3a4250"/><text x="13" y="6.5" font-size="6" fill="#ccc" text-anchor="middle" font-family="Liberation Sans">A</text></svg>
<div class="a" style="left:1616px;top:145px;width:60px;height:20px;background:#222b3a;border-radius:2px"></div>
<div class="a" style="left:1617px;top:145px;width:19px;height:20px;background:#1482c8;"></div>
<svg class="a" style="left:1617px;top:145px;" width="59" height="20" viewBox="0 0 59 20"><circle cx="9.5" cy="10" r="8" fill="#b8b8b8" stroke="#e8f6ff" stroke-width="1.5"/><path d="M1.5 10Q9.5 14 17.5 10M9.5 2Q5 10 9.5 18" fill="none" stroke="#f0f0f0" stroke-width="1"/><circle cx="29.5" cy="10" r="8" fill="#c0c2c6"/><circle cx="49.5" cy="10" r="8" fill="none" stroke="#b0b4ba" stroke-width="1"/><path d="M41.5 10Q49.5 14 57.5 10M49.5 2Q45 10 49.5 18" fill="none" stroke="#b0b4ba" stroke-width="1"/></svg>
<div class="a" style="left:1689px;top:145px;width:80px;height:20px;background:#222b3a;border-radius:2px"></div>
<div class="a" style="left:1690px;top:145px;width:19px;height:20px;background:#1482c8;"></div>
<svg class="a" style="left:1689px;top:145px;" width="80" height="20" viewBox="0 0 80 20"><rect x="3.5" y="3.5" width="13" height="13" fill="none" stroke="#e8f2fa" stroke-width="1.2" stroke-dasharray="1.5 2"/><circle cx="29" cy="10" r="6.5" fill="none" stroke="#d8dce0" stroke-width="1.2" stroke-dasharray="1.5 2"/><path d="M43 3.5H52L46 10L52 16.5H43Z" fill="none" stroke="#d8dce0" stroke-width="1.2" stroke-dasharray="1.5 2"/><path d="M62 16Q65 3 68 10T76 4" fill="none" stroke="#d8dce0" stroke-width="1.2" stroke-dasharray="1.5 2"/></svg>
<div class="a" style="left:1781px;top:145px;width:123px;height:20px;background:#1f2a3c;border-radius:3px"></div>
<svg class="a" style="left:1786px;top:148px;" width="10" height="14" viewBox="0 0 10 14"><path d="M1 1V11L3.5 8.5L6 13L7.5 12.3L5.3 8H9Z" fill="#fff"/></svg>
<div class="t" style="left:1824.0px;top:147.4px;font-size:12.5px;color:#f0f2f5;-webkit-text-stroke:0.25px #f0f2f5;letter-spacing:0.05px;">Select</div>
<div class="a" style="left:1908px;top:145px;width:21px;height:20px;background:#1f2a3c;border-radius:2px"></div>
<svg class="a" style="left:1908px;top:145px;" width="21" height="20" viewBox="0 0 21 20"><circle cx="10.5" cy="10" r="7" fill="none" stroke="#fff" stroke-width="1.5"/><text x="10.5" y="13.5" font-size="9" font-weight="bold" fill="#fff" text-anchor="middle" font-family="Liberation Sans">L</text></svg>
<div class="a" style="left:1933px;top:145px;width:21px;height:20px;background:#1f2a3c;border-radius:2px"></div>
<svg class="a" style="left:1933px;top:145px;" width="21" height="20" viewBox="0 0 21 20"><circle cx="10.5" cy="10" r="7" fill="none" stroke="#fff" stroke-width="1.5"/><text x="10.5" y="13.5" font-size="9" font-weight="bold" fill="#fff" text-anchor="middle" font-family="Liberation Sans">G</text></svg>
<div class="a" style="left:1957px;top:145px;width:21px;height:20px;background:#1f2a3c;border-radius:2px"></div>
<svg class="a" style="left:1957px;top:145px;" width="21" height="20" viewBox="0 0 21 20"><path d="M10 2L17 6V14L10 18L3 14V6Z" fill="#808080" stroke="#d0d0d0" stroke-width="1"/><path d="M3 6L10 10L17 6M10 10V18" fill="none" stroke="#d0d0d0" stroke-width="1"/><path d="M12 10L19 17L16 17.5L14 19Z" fill="#f0b020"/></svg>
<div class="a" style="left:392px;top:1068px;width:1607px;height:21px;background:#262a32;"></div>
<div class="a" style="left:414px;top:1068px;width:125px;height:21px;background:#2e333c;"></div>
<div class="t" style="left:431.0px;top:1072.8px;font-size:12.0px;color:#e8eaee;-webkit-text-stroke:0.25px #e8eaee;letter-spacing:-0.30px;">Start Page</div>
<svg class="a" style="left:524px;top:1073px;" width="10" height="10" viewBox="0 0 10 10"><path d="M1 1L9 9M9 1L1 9" stroke="#e0e0e0" stroke-width="1.3"/></svg>
<div class="a" style="left:539px;top:1068px;width:195px;height:21px;background:#ffffff;"></div>
<div class="a" style="left:539px;top:1086px;width:195px;height:2.5px;background:#1b8fd2;"></div>
<div class="t" style="left:549.0px;top:1072.8px;font-size:12.0px;color:#1a1a1a;-webkit-text-stroke:0.25px #1a1a1a;letter-spacing:-0.13px;">midas CIM_Drawing View.cimz</div>
<svg class="a" style="left:718px;top:1073px;" width="10" height="10" viewBox="0 0 10 10"><path d="M1 1L9 9M9 1L1 9" stroke="#222" stroke-width="1.3"/></svg>
<div class="a" style="left:1px;top:1089px;width:625px;height:35px;background:#1e1f23;"></div>
<div class="a" style="left:626px;top:1089px;width:1373px;height:35px;background:#2b3039;"></div>
<svg class="a" style="left:606px;top:1095px;" width="10" height="6" viewBox="0 0 10 6"><path d="M0.5 5.5L5 0.5L9.5 5.5Z" fill="#fff"/></svg>
<div class="a" style="left:856px;top:1097px;width:21px;height:20px;background:#1a86c8;"></div>
<svg class="a" style="left:856px;top:1097px;" width="21" height="20" viewBox="0 0 21 20"><circle cx="8" cy="8" r="3" fill="none" stroke="#fff" stroke-width="1.5"/><path d="M8 11V17M6 15L8 17.5L10 15M11 8H17M15 6L17.5 8L15 10" fill="none" stroke="#fff" stroke-width="1.3"/></svg>
<div class="a" style="left:881px;top:1097px;width:20px;height:20px;background:#4a4f58;"></div>
<svg class="a" style="left:881px;top:1097px;" width="20" height="20" viewBox="0 0 20 20"><path d="M3 17L17 3V17Z" fill="none" stroke="#b8c8e0" stroke-width="1.1"/><path d="M4 16H16V4" fill="none" stroke="#b8c8e0" stroke-width="1" stroke-dasharray="1 1.5"/></svg>
<div class="a" style="left:907px;top:1097px;width:19px;height:20px;background:#4a4f58;"></div>
<div class="t" style="left:911.7px;top:1100.7px;font-size:14.5px;color:#e8eaee;-webkit-text-stroke:0.25px #e8eaee;">X</div>
<div class="a" style="left:926px;top:1097px;width:98px;height:20px;background:#1f232a;"></div>
<div class="t" style="left:969.4px;top:1101.3px;font-size:11.5px;color:#eef0f2;-webkit-text-stroke:0.25px #eef0f2;letter-spacing:-0.09px;">1571.45 m</div>
<div class="a" style="left:1032px;top:1097px;width:19px;height:20px;background:#4a4f58;"></div>
<div class="t" style="left:1036.7px;top:1100.7px;font-size:14.5px;color:#e8eaee;-webkit-text-stroke:0.25px #e8eaee;">Y</div>
<div class="a" style="left:1051px;top:1097px;width:98px;height:20px;background:#1f232a;"></div>
<div class="t" style="left:1082.5px;top:1100.8px;font-size:12.0px;color:#eef0f2;-webkit-text-stroke:0.25px #eef0f2;letter-spacing:-0.24px;">-58.03399 m</div>
<div class="a" style="left:1156px;top:1097px;width:19px;height:20px;background:#4a4f58;"></div>
<div class="t" style="left:1161.1px;top:1100.7px;font-size:14.5px;color:#e8eaee;-webkit-text-stroke:0.25px #e8eaee;">Z</div>
<div class="a" style="left:1175px;top:1097px;width:99px;height:20px;background:#1f232a;"></div>
<div class="t" style="left:1217.7px;top:1100.8px;font-size:12.0px;color:#eef0f2;-webkit-text-stroke:0.25px #eef0f2;letter-spacing:-0.28px;">0.00000 m</div>
<div class="a" style="left:1281px;top:1097px;width:81px;height:20px;background:#3a3f48;border-radius:2px"></div>
<div class="t" style="left:1288.0px;top:1101.8px;font-size:12.0px;color:#d8dade;-webkit-text-stroke:0.25px #d8dade;">GCS</div>
<svg class="a" style="left:1348px;top:1104px;" width="8" height="6" viewBox="0 0 8 6"><path d="M1 1L4 4L7 1" fill="none" stroke="#c0c0c0" stroke-width="1"/></svg>
<div class="a" style="left:1828px;top:1097px;width:82px;height:20px;background:#3c414b;border-radius:2px"></div>
<div class="t" style="left:1836.0px;top:1099.7px;font-size:14.5px;color:#e8eaee;-webkit-text-stroke:0.25px #e8eaee;">N</div>
<svg class="a" style="left:1897px;top:1105px;" width="8" height="6" viewBox="0 0 8 6"><path d="M1 1L4 4L7 1" fill="none" stroke="#c0c0c0" stroke-width="1"/></svg>
<div class="a" style="left:1917px;top:1097px;width:73px;height:20px;background:#3c414b;border-radius:2px"></div>
<div class="t" style="left:1925.0px;top:1100.1px;font-size:14.0px;color:#e8eaee;-webkit-text-stroke:0.25px #e8eaee;">m</div>
<svg class="a" style="left:1976px;top:1105px;" width="8" height="6" viewBox="0 0 8 6"><path d="M1 1L4 4L7 1" fill="none" stroke="#c0c0c0" stroke-width="1"/></svg>
</body></html>
